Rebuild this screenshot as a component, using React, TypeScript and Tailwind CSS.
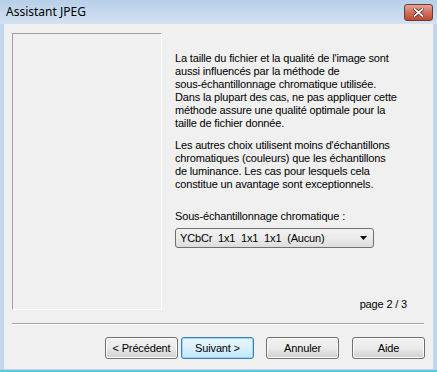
import React from 'react';

const ui = { fontFamily: '"Liberation Sans", Arial, sans-serif' };

const Btn: React.FC<{ label: string; primary?: boolean; className?: string }> = ({ label, primary, className }) => (
  <button
    type="button"
    style={ui}
    className={`h-[22px] w-[73px] rounded-[3px] border text-[11px] tracking-[-0.15px] text-black ${
      primary
        ? 'border-[#3c7fb1] bg-gradient-to-b from-[#eaf6fd] via-[#d9f0fc] to-[#bee6fd] shadow-[inset_0_0_0_1px_#9fd5f5]'
        : 'border-[#707070] bg-gradient-to-b from-[#f2f2f2] via-[#ebebeb] to-[#cfcfcf] shadow-[inset_0_0_0_1px_#fcfcfc]'
    } ${className ?? ''}`}
  >
    {label}
  </button>
);

export default function App() {
  return (
    <div className="flex h-[372px] w-[437px] flex-col border-b-2 border-[#5cc6de] bg-[#c4d6ec]">
      {/* title bar */}
      <div className="flex h-[24px] items-center justify-between bg-gradient-to-b from-[#b7cfe9] to-[#d3e2f2] pl-[6px] pr-[4px]">
        <span style={{ fontFamily: '"Noto Sans", "Open Sans", sans-serif' }} className="text-[12px] text-black">
          Assistant JPEG
        </span>
        <div className="mt-[1px] flex h-[17px] w-[29px] items-center justify-center rounded-[3px] border border-[#6d3a3a] bg-gradient-to-b from-[#e8a595] via-[#d0705c] to-[#c2452e]">
          <svg width="11" height="9" viewBox="0 0 11 9">
            <path d="M1.5 1 L9.5 8 M9.5 1 L1.5 8" stroke="#4a1a14" strokeWidth="3.2" strokeLinecap="square" />
            <path d="M1.5 1 L9.5 8 M9.5 1 L1.5 8" stroke="#ffffff" strokeWidth="1.8" strokeLinecap="square" />
          </svg>
        </div>
      </div>

      {/* client area */}
      <div className="mx-[4px] mb-[1px] flex-1 border-l border-[#e8eef6] bg-[#f0f0f0] pl-[7px] pt-[9px]" style={ui}>
        <div className="flex">
          <div className="h-[277px] w-[150px] border-b border-l border-r border-t border-b-white border-l-[#a0a0a0] border-r-white border-t-[#a0a0a0]" />
          <div className="ml-[13px] flex h-[277px] w-[233px] flex-col pt-[19px] text-[11px] leading-[13px] tracking-[-0.16px] text-black">
            <p className="whitespace-nowrap">
              La taille du fichier et la qualité de l'image sont
              <br />
              aussi influencés par la méthode de
              <br />
              sous-échantillonnage chromatique utilisée.
              <br />
              Dans la plupart des cas, ne pas appliquer cette
              <br />
              méthode assure une qualité optimale pour la
              <br />
              taille de fichier donnée.
            </p>
            <p className="mt-[9px] whitespace-nowrap">
              Les autres choix utilisent moins d'échantillons
              <br />
              chromatiques (couleurs) que les échantillons
              <br />
              de luminance. Les cas pour lesquels cela
              <br />
              constitue un avantage sont exceptionnels.
            </p>
            <p className="mt-[19px]">Sous-échantillonnage chromatique :</p>
            <div className="mt-[5px] flex h-[20px] w-[199px] items-center justify-between rounded-[3px] border border-[#707070] bg-gradient-to-b from-[#f2f2f2] via-[#ebebeb] to-[#dcdcdc] pl-[4px] pr-[6px]">
              <span className="whitespace-pre">YCbCr  1x1  1x1  1x1  (Aucun)</span>
              <svg width="7" height="4" viewBox="0 0 7 4">
                <path d="M0 0 H7 L3.5 4 Z" fill="#000" />
              </svg>
            </div>
            <p className="mt-auto mb-[-1px] pr-[1px] text-right">page 2 / 3</p>
          </div>
        </div>

        <div className="mt-[13px] h-[2px] w-[412px] border-b border-t border-b-white border-t-[#a0a0a0]" />

        <div className="mt-[12px] flex w-[413px] justify-end">
          <Btn label="< Précédent" />
          <Btn label="Suivant >" primary className="ml-[3px]" />
          <Btn label="Annuler" className="ml-[12px]" />
          <Btn label="Aide" className="ml-[13px]" />
        </div>
      </div>
    </div>
  );
}
